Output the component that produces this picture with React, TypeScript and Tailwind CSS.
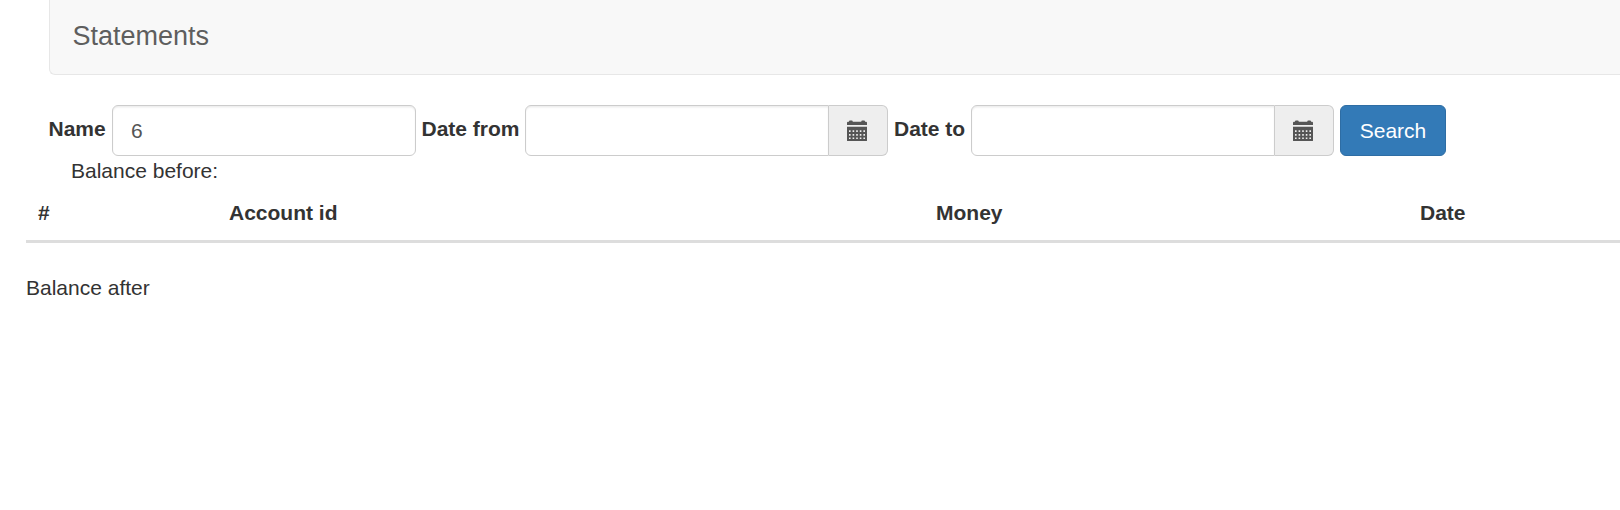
import React, { useState } from "react";

const headers = ["#", "Account id", "Money", "Date"];

function CalendarIcon() {
  return (
    <svg width="20" height="21" viewBox="0 0 20 21" className="block" aria-hidden="true">
      <path
        fill="#555555"
        fillRule="evenodd"
        d="M0 5V2.8Q0 1.8 1 1.8H2V1.3Q2 0.4 3 0.4H4.7Q5.7 0.4 5.7 1.3V1.8H14.3V1.3Q14.3 0.4 15.3 0.4H17Q18 0.4 18 1.3V1.8H19Q20 1.8 20 2.8V5ZM0 6.8H20V20.4Q20 21 19.4 21H0.6Q0 21 0 20.4ZM2 10.2V11.9H3.6V10.2ZM5.6 10.2V11.9H7.2V10.2ZM9.2 10.2V11.9H10.8V10.2ZM12.8 10.2V11.9H14.4V10.2ZM16.4 10.2V11.9H18V10.2ZM2 14.1V15.7H3.6V14.1ZM5.6 14.1V15.7H7.2V14.1ZM9.2 14.1V15.7H10.8V14.1ZM12.8 14.1V15.7H14.4V14.1ZM16.4 14.1V15.7H18V14.1ZM2 17.6V19.1H3.6V17.6ZM5.6 17.6V19.1H7.2V17.6ZM9.2 17.6V19.1H10.8V17.6ZM12.8 17.6V19.1H14.4V17.6ZM16.4 17.6V19.1H18V17.6Z"
      />
    </svg>
  );
}

const inputBase =
  "h-[51px] border border-[#cccccc] bg-white pl-[18px] pr-[17px] pt-px text-[21px] text-[#555555] shadow-[inset_0_1.5px_1.5px_rgba(0,0,0,0.075)] outline-none";

function DateField({ id }: { id: string }) {
  const [value, setValue] = useState("");
  return (
    <div className="flex">
      <input
        id={id}
        value={value}
        onChange={(e) => setValue(e.target.value)}
        className={`${inputBase} w-[304px] rounded-l-[6px]`}
      />
      <span className="flex h-[51px] w-[59px] items-center rounded-r-[6px] border border-l-0 border-[#cccccc] bg-[#eeeeee] pl-[18px]">
        <CalendarIcon />
      </span>
    </div>
  );
}

export default function App() {
  const [name, setName] = useState("6");
  return (
    <div className="h-[510px] w-full overflow-hidden bg-white font-['Liberation_Sans',Arial,sans-serif] text-[21px] leading-[30px] text-[#333333]">
      <nav className="ml-[49px] h-[75px] rounded-bl-[6px] border-b border-l border-[#e7e7e7] bg-[#f8f8f8] pl-[22.5px] pt-[21px]">
        <span className="block text-[27px] leading-[30px] text-[#5e5e5e]">Statements</span>
      </nav>

      <form className="ml-[48.5px] mt-[30px] flex h-[51px]" onSubmit={(e) => e.preventDefault()}>
        <label htmlFor="name" className="w-[63.5px] pt-[9px] font-bold">Name</label>
        <input
          id="name"
          value={name}
          onChange={(e) => setName(e.target.value)}
          className={`${inputBase} w-[304px] rounded-[6px]`}
        />
        <label htmlFor="from" className="ml-[5.5px] w-[103.5px] whitespace-nowrap pt-[9px] font-bold">Date from</label>
        <DateField id="from" />
        <label htmlFor="to" className="ml-1.5 w-[77px] whitespace-nowrap pt-[9px] font-bold">Date to</label>
        <DateField id="to" />
        <button
          type="submit"
          className="ml-1.5 h-[51px] w-[106px] rounded-[6px] border border-[#2e6da4] bg-[#337ab7] pt-px text-center text-white"
        >
          Search
        </button>
      </form>

      <p className="pl-[71px]">Balance before:</p>

      <div className="ml-[26px] grid grid-cols-[191px_707px_484px_1fr] border-b-[3px] border-[#dddddd] py-3 font-bold">
        {headers.map((h) => (
          <span key={h} className="pl-3">{h}</span>
        ))}
      </div>

      <p className="ml-[26px] mt-[30px]">Balance after</p>
    </div>
  );
}
